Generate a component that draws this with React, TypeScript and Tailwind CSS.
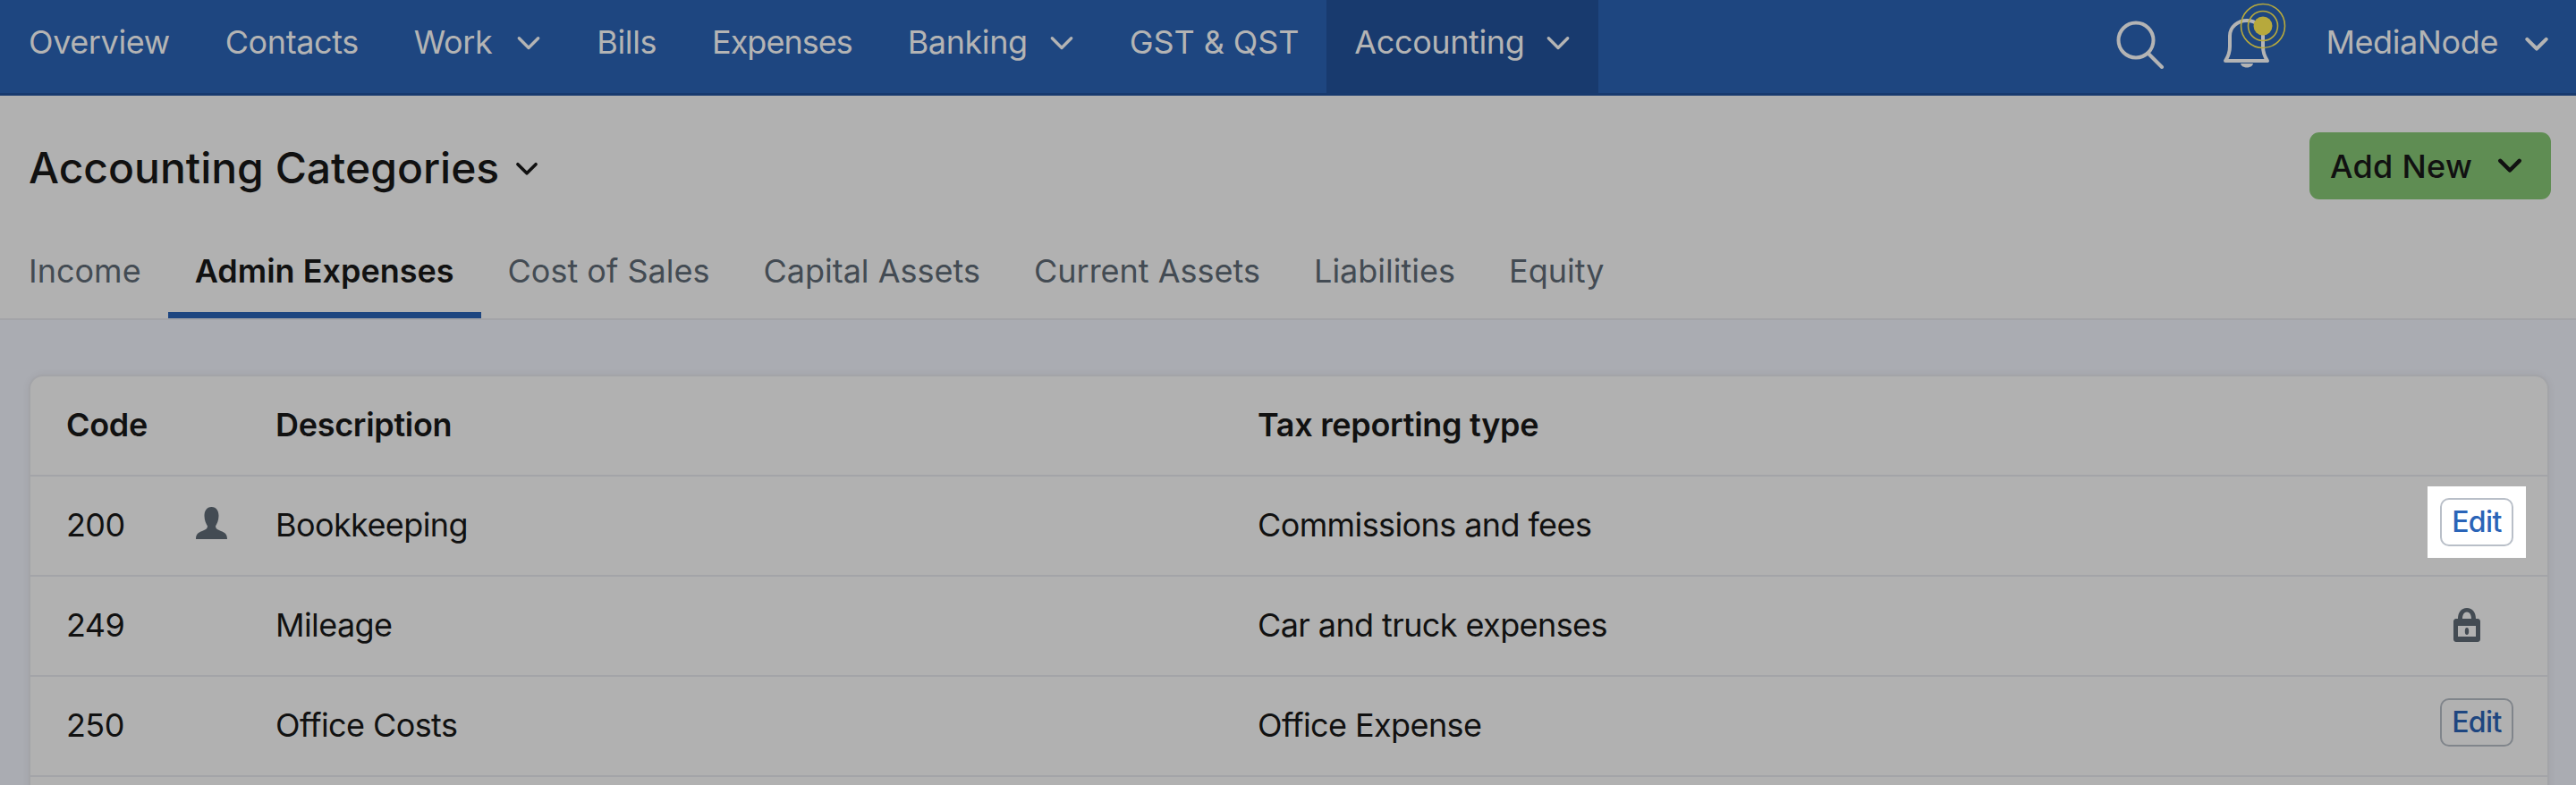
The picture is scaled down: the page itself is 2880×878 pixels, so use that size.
import React from "react";

const font = { fontFamily: '"Inter", "Liberation Sans", sans-serif' };

function Chevron({ className = "", w = 3 }: { className?: string; w?: number }) {
  return (
    <svg viewBox="0 0 24 16" className={className} fill="none" stroke="currentColor" strokeWidth={w} strokeLinecap="round" strokeLinejoin="round">
      <path d="M2.500 2.500 L12 12 L21.500 2.500" />
    </svg>
  );
}

const navItems = [
  { t: "Overview", c: false, k: "" },
  { t: "Contacts", c: false, k: "" },
  { t: "Work", c: true, k: "gap-[27px]" },
  { t: "Bills", c: false, k: "" },
  { t: "Expenses", c: false, k: "tracking-[-1px]" },
  { t: "Banking", c: true, k: "" },
  { t: "GST & QST", c: false, k: "tracking-[-0.1px]" },
  { t: "Accounting", c: true, k: "bg-[#183a6e]" },
];

const tabs = ["Income", "Admin Expenses", "Cost of Sales", "Capital Assets", "Current Assets", "Liabilities", "Equity"];

function EditButton({ light }: { light?: boolean }) {
  return (
    <button className={`w-[82px] h-[54px] rounded-[10px] border-2 text-[32px] font-medium flex items-center justify-center ${light ? "border-[#b9bfc8] bg-white text-[#2a64b8]" : "border-[#80858b] text-[#1e4680]"}`}>
      Edit
    </button>
  );
}

function Row({ code, person, desc, tax, action }: { code: string; person?: boolean; desc: string; tax: string; action: React.ReactNode }) {
  return (
    <div className="flex items-center h-[112px] pb-[2px] border-t-2 border-[#a3a4a8] text-[36px] tracking-[-0.6px] text-[#111111]">
      <div className="w-[145px] pl-[40px]">{code}</div>
      <div className="w-[129px] flex">
        {person && (
          <svg viewBox="0 0 35 36" className="w-[35px] h-[36px] ml-[40px] -mt-[4px] text-[#434b53]" fill="currentColor">
            <path d="M17.5 0C23 0 25.5 4.5 25.5 10C25.5 15 23.5 19 22 21.5C22 24 24 25.500 28 27C32 28.500 35 30 35 36H0C0 30 3 28.500 7 27C11 25.500 13 24 13 21.500C11.500 19 9.500 15 9.500 10C9.500 4.500 12 0 17.500 0Z" />
          </svg>
        )}
      </div>
      <div className="w-[1098px]">{desc}</div>
      <div className="flex-1">{tax}</div>
      <div className="flex justify-end">{action}</div>
    </div>
  );
}

export default function App() {
  return (
    <div className="w-[2880px] h-[878px] overflow-hidden bg-[#aaacb2]" style={font}>
      <header className="h-[107px] bg-[#1e4680] border-b-[3px] border-[#183a6e] flex text-[#b4b4b4] text-[36px] tracking-[-0.4px]">
        <nav className="flex h-full pl-px">
          {navItems.map((n) => (
            <div key={n.t} className={`flex items-center h-full px-[31px] pb-[10px] gap-[24px] ${n.k}`}>
              <span>{n.t}</span>
              {n.c && <Chevron className="w-[28px] h-[18px] mt-[4px]" />}
            </div>
          ))}
        </nav>
        <div className="ml-auto flex items-center h-full pr-[30px] pb-[4px]">
          <svg viewBox="0 0 54 54" className="w-[54px] h-[54px] text-[#b4b4b4]" fill="none" stroke="currentColor" strokeWidth="4" strokeLinecap="round">
            <circle cx="22" cy="22" r="19.500" />
            <path d="M36 37 L51 52" />
          </svg>
          <div className="w-[72px] h-[96px] ml-[64px] mr-[44px]">
            <svg viewBox="0 0 72 96" className="w-[72px] h-[96px]" fill="none">
              <path d="M4 66 C8 60 9 56 9 50 L9 38 C9 28 18 21 28 21 C38 21 46 28 46 38 L46 50 C46 56 47 60 51 66 Z" stroke="#b4b4b4" strokeWidth="4" strokeLinejoin="round" />
              <path d="M21 69 C22 75 34 75 35 69 Z" fill="#b4b4b4" />
              <circle cx="46" cy="27" r="24.500" stroke="#b7a93c" strokeWidth="1.600" />
              <circle cx="46" cy="27" r="16.500" stroke="#b7a93c" strokeWidth="1.600" />
              <circle cx="46" cy="27" r="10.500" fill="#b7a93c" />
            </svg>
          </div>
          <span className="pb-[6px]">MediaNode</span>
          <Chevron className="w-[28px] h-[18px] ml-[29px]" w={3.600} />
        </div>
      </header>
      <main>
        <div className="bg-[#b1b1b1] h-[251px] border-b-2 border-[#a3a4a8] flex flex-col">
          <div className="flex justify-between items-start h-[166px] pl-[32px] pr-[28px] pt-[41px]">
            <div className="flex items-center gap-[18px] pt-[4px] text-[#111111]">
              <h1 className="text-[48px] font-medium">Accounting Categories</h1>
              <Chevron className="w-[26px] h-[17px] mt-[2px]" w={3.400} />
            </div>
            <button className="w-[270px] h-[75px] rounded-[11px] bg-[#5f8d53] text-[#111111] text-[36px] font-medium tracking-[0.3px] flex items-center pl-[23px] gap-[28px]">
              <span>Add New</span>
              <Chevron className="w-[28px] h-[18px]" w={4} />
            </button>
          </div>
          <div className="flex flex-1 text-[36px] text-[#434b53]">
            {tabs.map((t) => (
              <div key={t} className={`px-[30px] first:pl-[32px] flex items-start pt-[3px] ${t === "Admin Expenses" ? "text-[#111111] font-semibold border-b-[7px] border-[#1e4680]" : ""}`}>
                {t}
              </div>
            ))}
          </div>
        </div>
        <div className="ml-[32px] mr-[30px] mt-[61px] bg-[#b1b1b1] border-2 border-[#a3a4a8] rounded-t-[16px] h-[600px] shadow-[0_0_8px_rgba(0,0,0,0.06)]">
          <div className="flex items-center h-[110px] pb-[2px] text-[36px] font-semibold tracking-[-0.3px] text-[#111111]">
            <div className="w-[274px] pl-[40px]">Code</div>
            <div className="w-[1098px]">Description</div>
            <div>Tax reporting type</div>
          </div>
          <Row code="200" person desc="Bookkeeping" tax="Commissions and fees" action={<div className="bg-white px-[14px] py-[13px] mr-[24px] -mt-[6px]"><EditButton light /></div>} />
          <Row code="249" desc="Mileage" tax="Car and truck expenses" action={
            <svg viewBox="0 0 30 38" className="w-[30px] h-[38px] mr-[75px] text-[#434b53]" fill="currentColor">
              <path fillRule="evenodd" d="M15 0C21.500 0 25 5 25 12H27C29 12 30 13.500 30 15V35C30 37 28.500 38 27 38H3C1.500 38 0 37 0 35V15C0 13.500 1 12 3 12H5C5 5 8.500 0 15 0ZM10 12H20C20 7.500 18 4.500 15 4.500C12 4.500 10 7.500 10 12ZM5 20V32H25V20ZM15 22C16.500 22 17.200 23.500 17.200 26C17.200 28.500 16.500 30 15 30C13.500 30 12.800 28.500 12.800 26C12.800 23.500 13.500 22 15 22Z" />
            </svg>} />
          <Row code="250" desc="Office Costs" tax="Office Expense" action={<div className="-mt-[6px] mr-[38px]"><EditButton /></div>} />
          <div className="h-[20px] border-t-2 border-[#a3a4a8]" />
        </div>
      </main>
    </div>
  );
}
